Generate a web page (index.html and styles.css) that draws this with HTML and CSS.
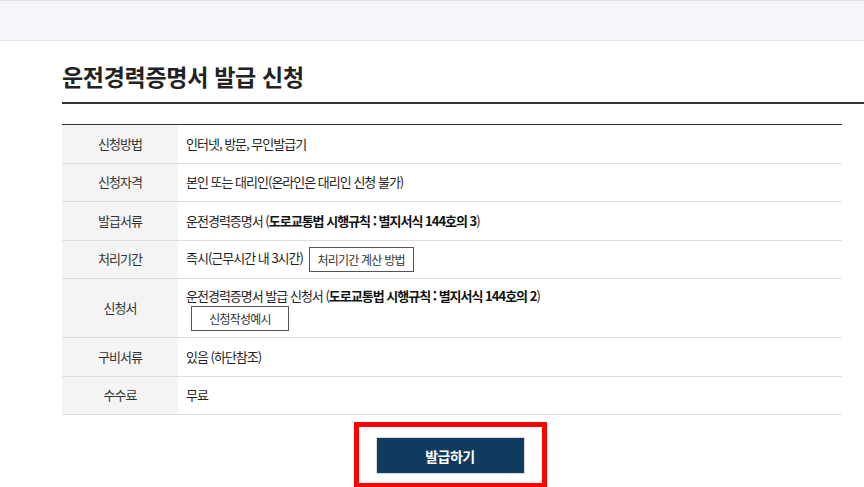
FILE: index.html
```html
<!DOCTYPE html>
<html lang="ko">
<head>
    <meta charset="utf-8">
    <title>운전경력증명서 발급 신청</title>
    <link rel="stylesheet" href="styles.css">
</head>
<body>
    <div class="top-band"></div>

    <div class="content">
        <h2 class="page-title">운전경력증명서 발급 신청</h2>

        <table class="info-table">
            <tbody>
                <tr>
                    <th>신청방법</th>
                    <td>인터넷, 방문, 무인발급기</td>
                </tr>
                <tr>
                    <th>신청자격</th>
                    <td>본인 또는 대리인(온라인은 대리인 신청 불가)</td>
                </tr>
                <tr>
                    <th>발급서류</th>
                    <td>운전경력증명서 (<b>도로교통법 시행규칙 : 별지서식 144호의 3</b>)</td>
                </tr>
                <tr>
                    <th>처리기간</th>
                    <td>즉시(근무시간 내 3시간) <button class="line-btn">처리기간 계산 방법</button></td>
                </tr>
                <tr>
                    <th>신청서</th>
                    <td class="stacked">
                        <div>운전경력증명서 발급 신청서 (<b>도로교통법 시행규칙 : 별지서식 144호의 2</b>)</div>
                        <button class="line-btn example-btn">신청작성예시</button>
                    </td>
                </tr>
                <tr>
                    <th>구비서류</th>
                    <td>있음 (하단참조)</td>
                </tr>
                <tr>
                    <th>수수료</th>
                    <td>무료</td>
                </tr>
            </tbody>
        </table>

        <div class="apply-row">
            <div class="highlight">
                <button class="apply-btn">발급하기</button>
            </div>
        </div>
    </div>
</body>
</html>
```

FILE: styles.css
```css
body {
    margin: 0;
    font-family: "Noto Sans CJK KR", "Noto Sans", sans-serif;
    color: #222;
    background: #fff;
    overflow: hidden;
}

.top-band {
    height: 39px;
    background-color: #f5f6fa;
    border-top: 1px solid #e1e3ea;
    border-bottom: 1px solid #e4e4e4;
}

.content {
    padding-left: 62px;
}

.page-title {
    margin: 0;
    padding: 20px 0 11px;
    font-size: 23px;
    line-height: 30px;
    font-weight: 700;
    letter-spacing: -0.3px;
    color: #222;
    border-bottom: 2px solid #333;
}

.info-table {
    width: 780px;
    margin-top: 20px;
    border-collapse: collapse;
    border-top: 1px solid #333;
    border-bottom: 1px solid #333;
    font-size: 13px;
    letter-spacing: -1px;
}

.info-table th,
.info-table td {
    height: 37.5px;
    padding: 0 8px;
    line-height: 20px;
    border-bottom: 1px solid #ddd;
    text-align: left;
}

.info-table th {
    width: 100px;
    background-color: #f4f4f4;
    color: #333;
    font-weight: 400;
    text-align: center;
}

.info-table td b {
    font-weight: 700;
    color: #111;
}

.info-table td.stacked {
    padding-top: 7px;
    padding-bottom: 6px;
}

.line-btn {
    height: 25px;
    margin-left: 3px;
    padding: 0 8px;
    border: 1px solid #555;
    background: #fff;
    font-family: inherit;
    font-size: 12px;
    letter-spacing: -0.8px;
    color: #333;
    vertical-align: middle;
}

.example-btn {
    display: block;
    width: 98px;
    margin-left: 5px;
}

.apply-row {
    width: 780px;
    display: flex;
    justify-content: center;
    padding-top: 7px;
}

.highlight {
    margin-right: 4px;
    padding: 10px 17px 9px;
    border: 5px solid #f00;
}

.apply-btn {
    width: 149px;
    height: 37px;
    border: 1px solid #d6dbe2;
    background-color: #103a60;
    color: #fff;
    font-family: inherit;
    font-size: 14px;
    font-weight: 700;
    letter-spacing: -0.5px;
}
```
